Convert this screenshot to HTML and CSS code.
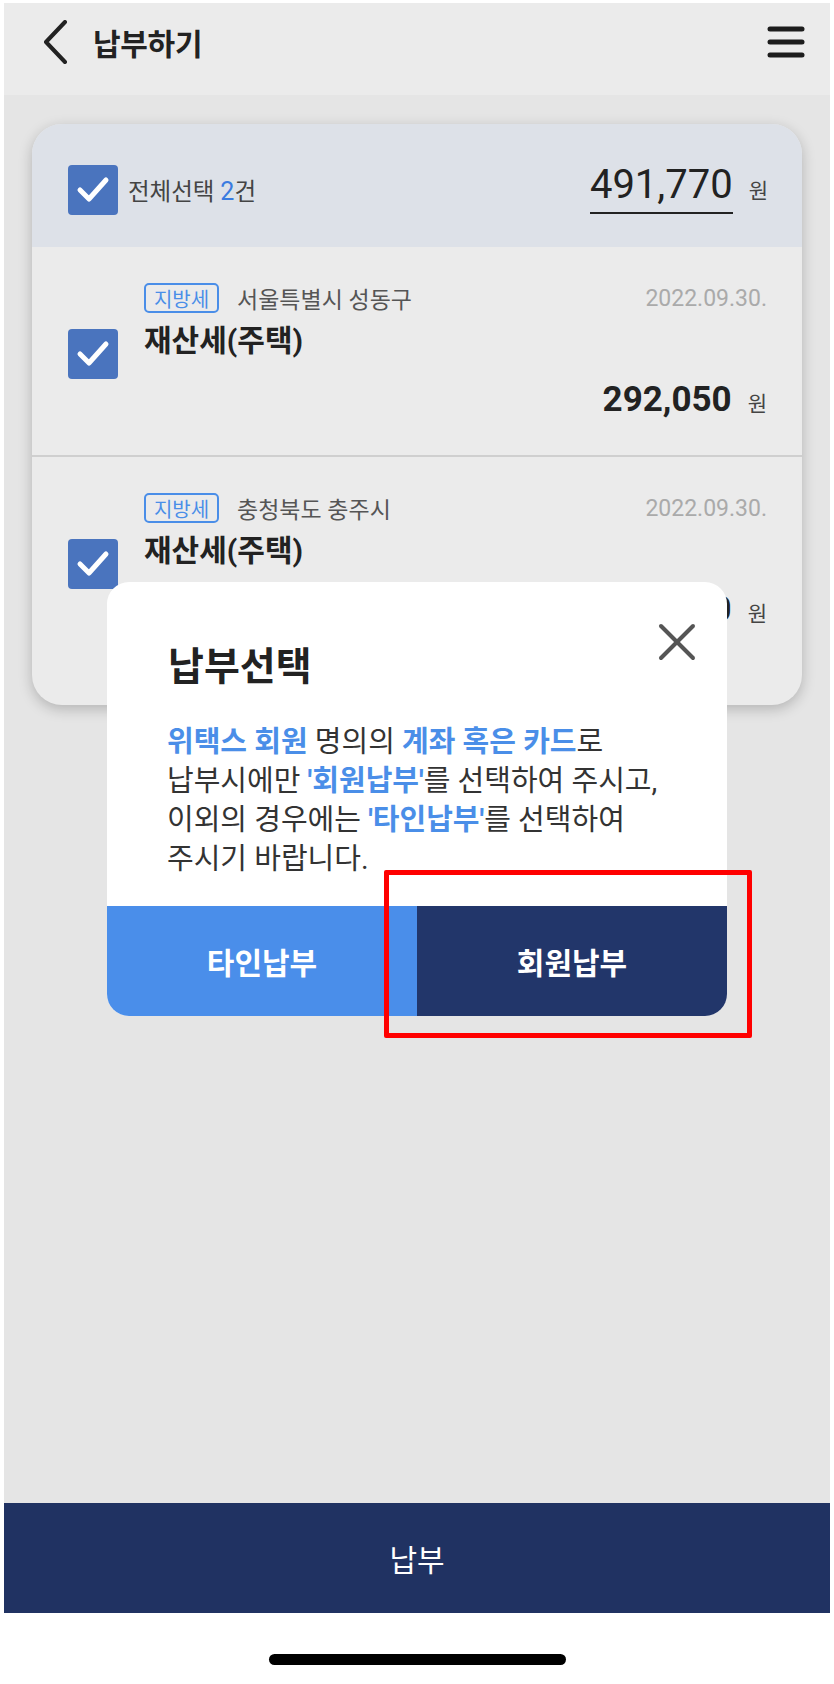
FILE: index.html
```html
<!DOCTYPE html>
<html lang="ko">
<head>
<meta charset="utf-8">
<title>납부하기</title>
<link rel="stylesheet" href="styles.css">
</head>
<body>
<div class="phone">
  <header class="topbar">
    <svg class="back" width="26" height="44" viewBox="0 0 26 44"><path d="M23 2 L4 22 L23 42" fill="none" stroke="#222" stroke-width="4" stroke-linecap="round" stroke-linejoin="round"/></svg>
    <h1 class="title">납부하기</h1>
    <svg class="menu" width="38" height="32" viewBox="0 0 38 32"><g stroke="#1c1c1c" stroke-width="5" stroke-linecap="round"><line x1="3" y1="3" x2="35" y2="3"/><line x1="3" y1="16" x2="35" y2="16"/><line x1="3" y1="29" x2="35" y2="29"/></g></svg>
  </header>

  <main class="content">
    <section class="card">
      <div class="card-head">
        <span class="chk"><svg width="50" height="50" viewBox="0 0 50 50"><path d="M12 25 L21 34 L38 15" fill="none" stroke="#fff" stroke-width="5" stroke-linecap="round" stroke-linejoin="round"/></svg></span>
        <span class="all-label">전체선택 <b class="cnt">2</b>건</span>
        <span class="total"><span class="total-num">491,770</span><span class="won">원</span></span>
      </div>

      <div class="item">
        <span class="chk chk-item"><svg width="50" height="50" viewBox="0 0 50 50"><path d="M12 25 L21 34 L38 15" fill="none" stroke="#fff" stroke-width="5" stroke-linecap="round" stroke-linejoin="round"/></svg></span>
        <div class="item-body">
          <div class="meta">
            <span class="tag">지방세</span>
            <span class="region">서울특별시 성동구</span>
            <span class="date">2022.09.30.</span>
          </div>
          <div class="item-title">재산세(주택)</div>
          <div class="amount"><span class="amt-num">292,050</span><span class="won">원</span></div>
        </div>
      </div>

      <div class="item item-last">
        <span class="chk chk-item"><svg width="50" height="50" viewBox="0 0 50 50"><path d="M12 25 L21 34 L38 15" fill="none" stroke="#fff" stroke-width="5" stroke-linecap="round" stroke-linejoin="round"/></svg></span>
        <div class="item-body">
          <div class="meta">
            <span class="tag">지방세</span>
            <span class="region">충청북도 충주시</span>
            <span class="date">2022.09.30.</span>
          </div>
          <div class="item-title">재산세(주택)</div>
          <div class="amount"><span class="amt-num">199,720</span><span class="won">원</span></div>
        </div>
      </div>
    </section>

    <div class="modal">
      <svg class="close" width="38" height="38" viewBox="0 0 38 38"><g stroke="#555" stroke-width="4" stroke-linecap="round"><line x1="3" y1="3" x2="35" y2="35"/><line x1="35" y1="3" x2="3" y2="35"/></g></svg>
      <div class="modal-body">
        <h2 class="modal-title">납부선택</h2>
        <p class="modal-text"><b class="hl">위택스 회원</b> 명의의 <b class="hl">계좌 혹은 카드</b>로<br>납부시에만 <b class="hl">'회원납부'</b>를 선택하여 주시고,<br>이외의 경우에는 <b class="hl">'타인납부'</b>를 선택하여<br>주시기 바랍니다.</p>
      </div>
      <div class="modal-btns">
        <button class="btn btn-other">타인납부</button>
        <button class="btn btn-member">회원납부</button>
      </div>
    </div>

    <div class="highlight"></div>
  </main>

  <footer class="paybar">납부</footer>
  <div class="home"><span class="home-ind"></span></div>
</div>
</body>
</html>
```

FILE: styles.css
```css
* { box-sizing: border-box; }
html, body { margin: 0; padding: 0; background: #fff; }
body {
  font-family: Roboto, "Noto Sans CJK KR", sans-serif;
  color: #222;
}
.phone {
  margin: 3px 4px 0;
  height: 1681px;
  display: flex;
  flex-direction: column;
}
.topbar {
  height: 92px;
  flex: none;
  background: #ebebeb;
  display: flex;
  align-items: center;
  padding: 0 25px 14px 38px;
}
.back { flex: none; }
.title {
  margin: 0 0 0 25px;
  font-size: 30px;
  font-weight: 700;
  color: #222;
  flex: 1;
  letter-spacing: -0.3px;
}
.menu { flex: none; }

.content {
  flex: 1;
  background: #e5e5e5;
  position: relative;
  padding: 29px 28px 0;
}
.card {
  background: #ebebeb;
  border-radius: 30px;
  overflow: hidden;
  box-shadow: 0 4px 14px rgba(0,0,0,0.22);
}
.card-head {
  height: 123px;
  background: #dde1e8;
  display: flex;
  align-items: center;
  padding: 8px 34px 0 36px;
}
.chk {
  width: 50px;
  height: 50px;
  flex: none;
  background: #4a74be;
  border-radius: 4px;
  display: block;
}
.chk svg { display: block; }
.all-label {
  margin-left: 10px;
  font-size: 23.5px;
  color: #444;
  flex: 1;
}
.cnt { font-weight: 400; color: #3a7be0; font-size: 25px; }
.total { display: flex; align-items: baseline; }
.total-num {
  font-size: 40px;
  line-height: 1;
  color: #222;
  padding-bottom: 7px;
  border-bottom: 2px solid #222;
}
.won {
  margin-left: 16px;
  font-size: 21px;
  color: #444;
}

.item {
  display: flex;
  align-items: flex-start;
  padding: 36px 35px 33px 36px;
  border-bottom: 2px solid #cfcfcf;
}
.item-last { border-bottom: 0; padding-bottom: 73px; }
.chk-item { margin-top: 46px; }
.item-body { flex: 1; margin-left: 26px; }
.meta {
  height: 30px;
  display: flex;
  align-items: center;
}
.tag {
  width: 75px;
  height: 30px;
  border: 2px solid #4a8ee8;
  border-radius: 5px;
  color: #4a8ee8;
  font-size: 20px;
  display: flex;
  align-items: center;
  justify-content: center;
}
.region {
  margin-left: 18px;
  font-size: 23px;
  color: #555;
  flex: 1;
}
.date {
  font-size: 23px;
  color: #aaa;
}
.item-title {
  margin-top: 8px;
  line-height: 40px;
  font-size: 30px;
  font-weight: 700;
  color: #222;
}
.amount {
  margin-top: 17px;
  height: 44px;
  display: flex;
  justify-content: flex-end;
  align-items: baseline;
  line-height: 44px;
}
.amt-num {
  font-size: 35px;
  font-weight: 700;
  color: #222;
}

.modal {
  position: absolute;
  left: 103px;
  top: 487px;
  width: 620px;
  background: #fff;
  border-radius: 22px;
  overflow: hidden;
}
.close { position: absolute; left: 551px; top: 41px; }
.modal-body { padding: 60px 20px 27px 61px; }
.modal-title {
  margin: 0;
  font-size: 39px;
  line-height: 50px;
  font-weight: 700;
  color: #222;
}
.modal-text {
  margin: 31px 0 0 -1px;
  font-size: 29px;
  line-height: 39px;
  color: #333;
  white-space: nowrap;
}
.hl { color: #4a8ee8; font-weight: 700; }
.modal-btns { display: flex; height: 110px; }
.btn {
  flex: 1;
  border: 0;
  margin: 0;
  font-family: inherit;
  font-size: 30px;
  font-weight: 700;
  color: #fff;
}
.btn-other { background: #4a8eea; }
.btn-member { background: #22366a; }

.highlight {
  position: absolute;
  left: 380px;
  top: 775px;
  width: 368px;
  height: 168px;
  border: 5px solid #ff0000;
  border-radius: 2px;
}

.paybar {
  height: 110px;
  flex: none;
  background: #203262;
  color: #fff;
  font-size: 30px;
  display: flex;
  align-items: center;
  justify-content: center;
}
.home {
  height: 71px;
  flex: none;
  background: #fff;
  padding-top: 41px;
  display: flex;
  justify-content: center;
}
.home-ind {
  width: 297px;
  height: 11px;
  background: #000;
  border-radius: 6px;
}
```
